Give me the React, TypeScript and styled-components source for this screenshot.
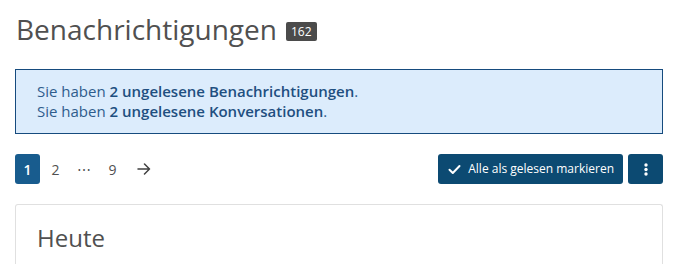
import React from "react";
import styled, { createGlobalStyle } from "styled-components";

const GlobalStyle = createGlobalStyle`
  html, body {
    margin: 0;
    padding: 0;
    background: #fff;
  }
  body {
    font-family: "Open Sans", "Liberation Sans", sans-serif;
    color: #505050;
  }
`;

const Page = styled.div`
  padding: 11px 15px 0;
  width: 678px;
  box-sizing: border-box;
`;

const TitleRow = styled.div`
  display: flex;
  align-items: center;
  gap: 9px;
  margin-bottom: 22px;
`;

const Title = styled.h1`
  margin: 0 0 0 1px;
  font-size: 28px;
  font-weight: 400;
  line-height: 36px;
  color: #505050;
`;

const Badge = styled.span`
  display: inline-block;
  background: #4b4b4b;
  color: #fff;
  font-size: 12px;
  line-height: 19px;
  padding: 0 5px;
  border-radius: 2px;
  margin-top: 4px;
`;

const Notice = styled.div`
  border: 1px solid #164b7e;
  background: #dcecfc;
  padding: 11px 21px 12px;
  font-size: 15px;
  line-height: 20px;
  color: #2f5c8c;
  margin-bottom: 20px;
`;

const Strong = styled.strong`
  font-weight: 600;
  color: #1f4f80;
`;

const Toolbar = styled.div`
  display: flex;
  align-items: center;
  justify-content: space-between;
  margin-bottom: 20px;
`;

const Pager = styled.div`
  display: flex;
  align-items: center;
  gap: 3px;
`;

const PageLink = styled.span<{ $active?: boolean; $next?: boolean }>`
  display: inline-flex;
  align-items: center;
  justify-content: center;
  min-width: 25px;
  height: 30px;
  padding: 0 6px;
  box-sizing: border-box;
  border-radius: 3px;
  font-size: 14px;
  font-weight: ${(p) => (p.$active ? 600 : 400)};
  color: ${(p) => (p.$active ? "#fff" : "#505050")};
  background: ${(p) => (p.$active ? "#185c8e" : "transparent")};
  margin-left: ${(p) => (p.$next ? "3px" : "0")};
`;

const Actions = styled.div`
  display: flex;
  gap: 5px;
`;

const Button = styled.button`
  display: inline-flex;
  align-items: center;
  gap: 7px;
  height: 30px;
  padding: 0 9px 0 10px;
  border: none;
  border-radius: 3px;
  background: #0c4a72;
  color: #fff;
  font-family: inherit;
  font-size: 12px;
  line-height: 1;
`;

const MenuButton = styled(Button)`
  width: 35px;
  justify-content: center;
  padding: 0;
`;

const Card = styled.div`
  border: 1px solid #e0e0e0;
  border-bottom: none;
  border-radius: 3px 3px 0 0;
  height: 60px;
`;

const CardTitle = styled.h2`
  margin: 0;
  padding: 18px 21px 0;
  font-size: 24px;
  font-weight: 400;
  line-height: 30px;
  color: #505050;
`;

const Check = () => (
  <svg width="13" height="11" viewBox="0 0 13 11" fill="none">
    <path d="M1.5 5.8 L4.8 9 L11.5 2" stroke="#fff" strokeWidth="2" strokeLinecap="round" strokeLinejoin="round" />
  </svg>
);

const Dots = () => (
  <svg width="4" height="13" viewBox="0 0 4 13" fill="#fff">
    <circle cx="2" cy="2" r="1.7" />
    <circle cx="2" cy="6.5" r="1.7" />
    <circle cx="2" cy="11" r="1.7" />
  </svg>
);

const Arrow = () => (
  <svg width="14" height="12" viewBox="0 0 14 12" fill="none">
    <path d="M1 6 H12.5 M7.5 1 L12.5 6 L7.5 11" stroke="#404040" strokeWidth="1.5" strokeLinecap="round" strokeLinejoin="round" />
  </svg>
);

const App: React.FC = () => (
  <>
    <GlobalStyle />
    <Page>
      <TitleRow>
        <Title>Benachrichtigungen</Title>
        <Badge>162</Badge>
      </TitleRow>
      <Notice>
        Sie haben <Strong>2 ungelesene Benachrichtigungen</Strong>.
        <br />
        Sie haben <Strong>2 ungelesene Konversationen</Strong>.
      </Notice>
      <Toolbar>
        <Pager>
          <PageLink $active>1</PageLink>
          <PageLink>2</PageLink>
          <PageLink>⋯</PageLink>
          <PageLink>9</PageLink>
          <PageLink $next>
            <Arrow />
          </PageLink>
        </Pager>
        <Actions>
          <Button>
            <Check />
            Alle als gelesen markieren
          </Button>
          <MenuButton aria-label="Mehr">
            <Dots />
          </MenuButton>
        </Actions>
      </Toolbar>
      <Card>
        <CardTitle>Heute</CardTitle>
      </Card>
    </Page>
  </>
);

export default App;
